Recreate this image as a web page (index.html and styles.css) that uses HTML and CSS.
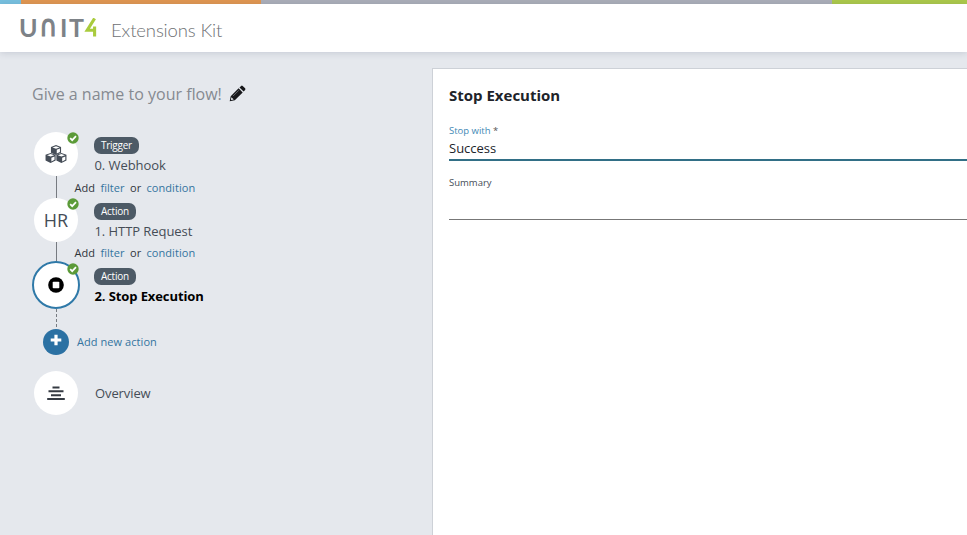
FILE: index.html
```html
<!DOCTYPE html>
<html lang="en">
<head>
<meta charset="utf-8">
<title>Extensions Kit</title>
<link rel="stylesheet" href="styles.css">
</head>
<body>
<svg class="defs" width="0" height="0" aria-hidden="true">
  <symbol id="check" viewBox="0 0 12 12"><circle cx="6" cy="6" r="5.7" fill="#5b9a38"/><path d="M3.2 6.2 5.2 8.2 9 4.2" fill="none" stroke="#fff" stroke-width="1.7"/></symbol>
  <symbol id="cube" viewBox="0 0 12 11"><path d="M6 .3 11.3 2.2V8.2L6 10.8.7 8.2V2.2Z" fill="#454d57"/><path d="M6 1.5 9.7 2.8 6 4.2 2.3 2.8Z" fill="#fff"/><path d="M6.8 5.3 10.1 4V7.6L6.8 9.2Z" fill="#fff"/></symbol>
</svg>
<div class="stripe"><i class="sky"></i><i class="orange"></i><i class="grey"></i><i class="lime"></i></div>
<header class="header">
  <div class="logo">
    <span class="lu">U</span><span class="ln">∩</span><span class="li">I</span><span class="lt">T</span>
    <svg class="mark" width="13" height="19" viewBox="0 0 13 19"><path d="M10.6.4 3.2 12.3H11.2M10.6 8.5V18.5" fill="none" stroke="#a9cb3d" stroke-width="3.1"/></svg>
  </div>
  <span class="product">Extensions Kit</span>
</header>
<main class="main">
  <aside class="sidebar">
    <div class="flow-name"><span>Give a name to your flow!</span>
      <svg width="17" height="17" viewBox="0 0 17 17"><path d="M.7 16.3 1.7 11.2 9.6 3.3 13.7 7.4 5.8 15.3ZM10.5 2.4 12.1.9Q12.9.2 13.7.9L16.1 3.3Q16.8 4.1 16.1 4.9L14.6 6.5Z" fill="#17181b"/><path d="M2.4 12.3 4.7 14.6 2.5 15 1.9 14.4Z" fill="#e5e8ed"/><path d="M4 11.1 9.8 5.3" stroke="#8c8f94" stroke-width=".7"/></svg>
    </div>
    <section class="step">
      <div class="rail"><div class="circle">
        <svg width="24" height="20" viewBox="0 0 24 20"><use href="#cube" x="6" y="0.8" width="12" height="10.5"/><use href="#cube" x="0.6" y="8.6" width="12" height="10.5"/><use href="#cube" x="11.4" y="8.6" width="12" height="10.5"/></svg>
        <svg class="check" width="12" height="12"><use href="#check"/></svg></div><div class="line"></div></div>
      <div class="info"><span class="badge">Trigger</span><div class="name">0. Webhook</div><div class="add">Add <a>filter</a> or <a>condition</a></div></div>
    </section>
    <section class="step">
      <div class="rail"><div class="circle"><span class="initials">HR</span>
        <svg class="check" width="12" height="12"><use href="#check"/></svg></div><div class="line"></div></div>
      <div class="info"><span class="badge">Action</span><div class="name">1. HTTP Request</div><div class="add">Add <a>filter</a> or <a>condition</a></div></div>
    </section>
    <section class="step current">
      <div class="rail"><div class="circle selected">
        <svg width="16" height="16" viewBox="0 0 16 16"><circle cx="8" cy="8" r="7.8"/><rect x="4.7" y="4.7" width="6.6" height="6.6" rx=".8" fill="#fff"/></svg>
        <svg class="check" width="12" height="12"><use href="#check"/></svg></div><div class="line dashed"></div></div>
      <div class="info"><span class="badge">Action</span><div class="name">2. Stop Execution</div></div>
    </section>
    <div class="new-action"><span class="plus"><svg width="12" height="12" viewBox="0 0 12 12"><path d="M6 .7V11.3M.7 6H11.3" stroke="#fff" stroke-width="3.2"/></svg></span><a>Add new action</a></div>
    <div class="overview"><div class="circle"><svg width="18" height="15" viewBox="0 0 18 15"><path d="M5.5 1.5H12.5M1.5 5.3H16.5M4 9.2H14M.2 13.1H17.8" stroke="#343a42" stroke-width="2"/></svg></div><span>Overview</span></div>
  </aside>
  <section class="panel">
    <h1>Stop Execution</h1>
    <div class="label active">Stop with <span>*</span></div>
    <div class="field focused">Success</div>
    <div class="label">Summary</div>
    <div class="field empty"></div>
  </section>
</main>
</body>
</html>
```

FILE: styles.css
```css
* { box-sizing: border-box; }
body { margin: 0; height: 535px; overflow: hidden; display: flex; flex-direction: column; background: #e5e8ed; font-family: "Open Sans", sans-serif; color: #454d57; }
.defs { position: absolute; }
.stripe { display: flex; height: 4px; flex: none; }
.stripe i { height: 4px; }
.sky { width: 21px; background: #77c0df; }
.orange { width: 240px; background: #e19650; }
.grey { width: 571px; background: #abaeb8; }
.lime { flex: 1; background: #acc94a; }
.header { height: 48px; flex: none; display: flex; background: #fff; padding-left: 19px; box-shadow: 0 1px 7px rgba(70, 80, 110, .2); }
.logo { display: flex; width: 92px; padding-top: 14px; color: #7d8287; font: 700 25px/19px Lato, sans-serif; }
.logo span { display: block; height: 19px; }
.lu { width: 20px; }
.ln { width: 21px; font-family: "DejaVu Sans", sans-serif; font-weight: 400; -webkit-text-stroke: 1.1px #7d8287; transform-origin: 50% 18px; transform: scale(.98, 1.16); }
.li { width: 9px; }
.lt { width: 15px; }
.mark { display: block; }
.product { padding-top: 13px; font: 300 18.5px/26px Lato, sans-serif; letter-spacing: -.13px; color: #6d7073; white-space: nowrap; }
.main { flex: 1; display: flex; }
.sidebar { width: 432px; flex: none; padding: 30px 0 0 32px; }
.flow-name { display: flex; gap: 7.5px; height: 50px; font-size: 16px; line-height: 24px; color: #858a91; white-space: nowrap; }
.flow-name svg { margin-top: 3px; }
.step { display: flex; height: 65.5px; }
.rail { width: 48px; display: flex; flex-direction: column; align-items: center; }
.circle { position: relative; width: 44px; height: 44px; flex: none; border-radius: 50%; background: #fff; display: flex; align-items: center; justify-content: center; }
.selected { width: 48px; height: 48px; margin-top: -2px; border: 2px solid #2f79a8; }
.check { position: absolute; right: -1px; top: 0; }
.selected .check { right: -1px; top: 0; }
.line { width: 1px; flex: 1; background: #777b81; }
.dashed { background: repeating-linear-gradient(#777b81 0 3px, transparent 3px 5px); }
.initials { font-size: 18px; }
.info { padding: 5px 0 0 14px; display: flex; flex-direction: column; align-items: flex-start; white-space: nowrap; }
.badge { height: 17px; padding: 0 7px; border-radius: 7px; background: #4d5a66; color: #fff; font-size: 10px; font-weight: 500; letter-spacing: -.25px; line-height: 17px; }
.name { font-size: 13px; letter-spacing: -.06px; line-height: 18px; margin: 2px 0 0 .5px; }
.add { font-size: 11px; letter-spacing: .06px; line-height: 16px; margin: 5.5px 0 0 -19.5px; color: #30353c; word-spacing: 2.4px; }
a { color: #34749f; }
.current { height: 65.5px; }
.current .name { color: #000; font-weight: 700; letter-spacing: -.1px; }
.new-action { display: flex; align-items: center; height: 26px; margin-left: 11px; gap: 8px; font-size: 11px; letter-spacing: .06px; }
.new-action a { margin-top: -1px; }
.plus { width: 26px; height: 26px; border-radius: 50%; background: #2b71a3; display: flex; align-items: center; justify-content: center; padding-bottom: 3px; }
.overview { display: flex; align-items: center; gap: 17px; margin: 16.5px 0 0 2px; font-size: 13px; letter-spacing: -.1px; }
.panel { flex: 1; margin-top: 16px; padding: 16px 0 0 16px; background: #fff; border: solid #cdd1d7; border-width: 1px 0 0 1px; }
h1 { margin: 0; font-size: 15px; line-height: 20px; color: #202329; }
.label { font-size: 9.5px; line-height: 14px; margin-top: 15px; }
.active { margin-top: 19px; color: #4489b5; }
.active span { color: #555; }
.field { height: 23px; font-size: 13px; line-height: 21px; border-bottom: 1px solid #777; color: #202329; }
.focused { border-bottom: 2px solid #326f86; }
.empty { height: 30px; }
```
